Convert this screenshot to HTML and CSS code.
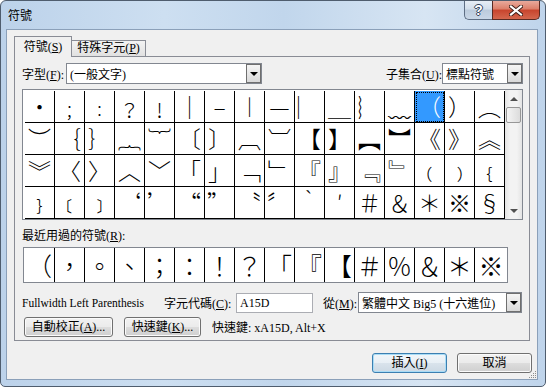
FILE: index.html
```html
<!DOCTYPE html>
<html lang="zh-Hant-TW">
<head>
    <meta charset="UTF-8">
    <title>符號</title>
    <link rel="stylesheet" href="styles.css">
</head>
<body>
<div class="window">
    <div class="titlebar">
        <span class="title">符號</span>
        <div class="caption">
            <span class="cap help">?</span>
            <span class="cap close">
                <svg width="14" height="11" viewBox="0 0 14 11">
                    <path d="M2 1.5 L12 9.5 M12 1.5 L2 9.5" stroke="#3a1c16" stroke-width="4" stroke-linecap="square" fill="none"/>
                    <path d="M2 1.5 L12 9.5 M12 1.5 L2 9.5" stroke="#fff" stroke-width="2.2" stroke-linecap="square" fill="none"/>
                </svg>
            </span>
        </div>
    </div>

    <div class="client">
        <div class="tabs">
            <div class="tab active">符號(<u>S</u>)</div>
            <div class="tab">特殊字元(<u>P</u>)</div>
        </div>

        <div class="page">
            <div class="font-row">
                <span class="font-label">字型(<u>F</u>):</span>
                <div class="combo font-combo"><span>(一般文字)</span><span class="drop"></span></div>
                <span class="subset-label">子集合(<u>U</u>):</span>
                <div class="combo subset-combo"><span>標點符號</span><span class="drop"></span></div>
            </div>

            <div class="symbols">
                <div class="sym-cells">
                    <span class="sym">·</span><span class="sym">﹔</span><span class="sym">﹕</span><span class="sym">﹖</span>
                    <span class="sym">﹗</span><span class="sym">｜</span><span class="sym">–</span><span class="sym">︱</span>
                    <span class="sym">—</span><span class="sym">︳</span><span class="sym">＿</span><span class="sym">︴</span>
                    <span class="sym">﹏</span><span class="sym sel">（</span><span class="sym">）</span><span class="sym">︵</span>

                    <span class="sym">︶</span><span class="sym">｛</span><span class="sym">｝</span><span class="sym">︷</span>
                    <span class="sym">︸</span><span class="sym">〔</span><span class="sym">〕</span><span class="sym">︹</span>
                    <span class="sym">︺</span><span class="sym">【</span><span class="sym">】</span><span class="sym">︻</span>
                    <span class="sym">︼</span><span class="sym">《</span><span class="sym">》</span><span class="sym">︽</span>

                    <span class="sym">︾</span><span class="sym">〈</span><span class="sym">〉</span><span class="sym">︿</span>
                    <span class="sym">﹀</span><span class="sym">「</span><span class="sym">」</span><span class="sym">﹁</span>
                    <span class="sym">﹂</span><span class="sym">『</span><span class="sym">』</span><span class="sym">﹃</span>
                    <span class="sym">﹄</span><span class="sym">﹙</span><span class="sym">﹚</span><span class="sym">﹛</span>

                    <span class="sym">﹜</span><span class="sym">﹝</span><span class="sym">﹞</span><span class="sym qr">‘</span>
                    <span class="sym ql">’</span><span class="sym qr">“</span><span class="sym ql">”</span><span class="sym qr">〝</span>
                    <span class="sym ql">〞</span><span class="sym">‵</span><span class="sym">′</span><span class="sym">＃</span>
                    <span class="sym">＆</span><span class="sym">＊</span><span class="sym">※</span><span class="sym">§</span>
                </div>
                <div class="scroll">
                    <span class="arrow up"></span>
                    <span class="thumb"></span>
                    <span class="track"></span>
                    <span class="arrow down"></span>
                </div>
            </div>

            <div class="recent-label">最近用過的符號(<u>R</u>):</div>
            <div class="recent">
                <span class="rc">（</span><span class="rc">，</span><span class="rc">。</span><span class="rc">、</span>
                <span class="rc">；</span><span class="rc">：</span><span class="rc">！</span><span class="rc">？</span>
                <span class="rc">「</span><span class="rc">『</span><span class="rc">【</span><span class="rc">＃</span>
                <span class="rc">％</span><span class="rc">＆</span><span class="rc">＊</span><span class="rc">※</span>
            </div>

            <div class="info-row">
                <span class="char-name">Fullwidth Left Parenthesis</span>
                <span class="code-label">字元代碼(<u>C</u>):</span>
                <span class="code-input">A15D</span>
                <span class="from-label">從(<u>M</u>):</span>
                <div class="combo from-combo"><span>繁體中文 Big5 (十六進位)</span><span class="drop"></span></div>
            </div>

            <div class="tool-row">
                <button class="btn autocorrect">自動校正(<u>A</u>)...</button>
                <button class="btn shortcut">快速鍵(<u>K</u>)...</button>
                <span class="shortcut-text">快速鍵: xA15D, Alt+X</span>
            </div>
        </div>

        <div class="dialog-buttons">
            <button class="btn default">插入(<u>I</u>)</button>
            <button class="btn">取消</button>
        </div>

        <svg class="grip" width="9" height="9" viewBox="0 0 9 9">
            <rect x="7" y="1" width="1" height="1" fill="#8c8c8c"/>
            <rect x="5" y="3" width="1" height="1" fill="#8c8c8c"/><rect x="7" y="3" width="1" height="1" fill="#8c8c8c"/>
            <rect x="3" y="5" width="1" height="1" fill="#8c8c8c"/><rect x="5" y="5" width="1" height="1" fill="#8c8c8c"/><rect x="7" y="5" width="1" height="1" fill="#8c8c8c"/>
            <rect x="1" y="7" width="1" height="1" fill="#8c8c8c"/><rect x="3" y="7" width="1" height="1" fill="#8c8c8c"/><rect x="5" y="7" width="1" height="1" fill="#8c8c8c"/><rect x="7" y="7" width="1" height="1" fill="#8c8c8c"/>
        </svg>
    </div>
</div>
</body>
</html>
```

FILE: styles.css
```css
* {
    margin: 0;
    padding: 0;
    box-sizing: border-box;
}

body {
    width: 546px;
    height: 387px;
    overflow: hidden;
    background: #fff;
    color: #000;
    font-family: "Liberation Serif", "Noto Sans CJK TC", serif;
    font-size: 12px;
}

/* Window frame */
.window {
    width: 546px;
    height: 387px;
    display: flex;
    flex-direction: column;
    border: 1px solid #4f5d6e;
    border-radius: 6px 6px 5px 5px;
    background: linear-gradient(to right, #bcd2ea 0%, #cddff1 30%, #c1d6ec 52%, #d7e5f3 78%, #bfd4eb 100%);
}

.titlebar {
    height: 28px;
    flex: none;
    display: flex;
    justify-content: space-between;
    align-items: flex-start;
    padding: 0 5px 0 7px;
}

.title {
    font-family: "Noto Sans CJK TC", sans-serif;
    line-height: 27px;
}

.caption {
    display: flex;
}

.cap {
    height: 19px;
    display: flex;
    align-items: center;
    justify-content: center;
    border: 1px solid #5e6e84;
    border-top: none;
}

.help {
    width: 28px;
    border-right: none;
    border-radius: 0 0 0 5px;
    background: linear-gradient(#e6edf5 0%, #d2deeb 45%, #bccbdc 50%, #c9d7e7 100%);
    color: #fff;
    font: bold 14px "Liberation Sans", sans-serif;
    text-shadow: 1px 0 0 #33435a, -1px 0 0 #33435a, 0 1px 0 #33435a, 0 -1px 0 #33435a;
}

.close {
    width: 48px;
    border-color: #5a2a22;
    border-radius: 0 0 5px 0;
    background: linear-gradient(#e9aa9c 0%, #dc7e69 45%, #c8442d 50%, #d4674e 100%);
}

/* Client area */
.client {
    flex: 1;
    position: relative;
    margin: 0 7px 6px 5px;
    padding: 6px 7px 0 7px;
    border: 1px solid #8ba0b9;
    background: #f0f0f0;
}

.tabs {
    display: flex;
    align-items: flex-end;
    height: 20px;
}

.tab {
    width: 75px;
    height: 16px;
    margin-left: -1px;
    border: 1px solid #898c95;
    border-bottom: none;
    background: linear-gradient(#f3f3f3, #e1e1e1);
    line-height: 15px;
    text-align: center;
}

.tab.active {
    position: relative;
    z-index: 1;
    width: 58px;
    height: 21px;
    margin-left: 0;
    margin-bottom: -1px;
    background: #f0f0f0;
    line-height: 20px;
}

.page {
    height: 285px;
    border: 1px solid #898c95;
    padding: 6px 6px 0 7px;
}

/* Font row */
.font-row {
    display: flex;
    align-items: center;
    height: 21px;
}

.font-label {
    width: 44px;
}

.combo {
    height: 21px;
    display: flex;
    align-items: center;
    justify-content: space-between;
    padding-left: 3px;
    border: 1px solid #828790;
    background: #fff;
}

.combo .drop {
    width: 15px;
    height: 19px;
    display: flex;
    align-items: center;
    justify-content: center;
    border: 1px solid #6f6f6f;
    background: linear-gradient(#f5f5f5, #d9d9d9);
}

.combo .drop::after {
    content: "";
    border-left: 4px solid transparent;
    border-right: 4px solid transparent;
    border-top: 4px solid #000;
}

.font-combo {
    width: 196px;
}

.subset-label {
    margin-left: auto;
    width: 56px;
}

.subset-combo {
    width: 81px;
}

/* Symbol grid */
.symbols {
    display: flex;
    height: 131px;
    margin-top: 5px;
    border: 1px solid #828790;
    background: #fff;
}

.sym-cells {
    display: grid;
    grid-template-columns: repeat(16, 30px);
    grid-auto-rows: 32px;
    padding: 1px 0 0 2px;
}

.sym {
    display: flex;
    align-items: center;
    justify-content: center;
    border-right: 1px solid #000;
    border-bottom: 1px solid #000;
    font-family: "Noto Sans CJK TC", sans-serif;
    font-size: 23px;
    font-weight: 300;
    line-height: 1;
}

.sym.ql {
    justify-content: flex-start;
    padding-left: 2px;
}

.sym.qr {
    justify-content: flex-end;
    padding-right: 3px;
}

.sym.sel {
    background: #3399ff;
    color: #fff;
    outline: 1px dotted #000;
    outline-offset: -2px;
}

.scroll {
    width: 17px;
    display: flex;
    flex-direction: column;
    background: linear-gradient(to right, #e4e4e4, #f3f3f3 30%, #f3f3f3 70%, #e4e4e4);
}

.arrow {
    height: 17px;
    display: flex;
    align-items: center;
    justify-content: center;
}

.arrow.up::after {
    content: "";
    border-left: 4px solid transparent;
    border-right: 4px solid transparent;
    border-bottom: 4px solid #505050;
}

.arrow.down::after {
    content: "";
    border-left: 4px solid transparent;
    border-right: 4px solid transparent;
    border-top: 4px solid #505050;
}

.thumb {
    height: 16px;
    margin: 0 1px;
    border: 1px solid #979797;
    border-radius: 2px;
    background: linear-gradient(to right, #f4f4f4, #dcdcdc);
}

.track {
    flex: 1;
}

/* Recently used */
.recent-label {
    height: 16px;
    margin-top: 8px;
    line-height: 16px;
}

.recent {
    display: flex;
    width: 485px;
    height: 36px;
    margin: 3px 0 0 1px;
    padding-left: 1px;
    border: 1px solid #828790;
    background: #fff;
}

.rc {
    width: 30px;
    display: flex;
    align-items: center;
    justify-content: center;
    border-right: 1px solid #000;
    font-family: "Noto Sans CJK TC", sans-serif;
    font-size: 25px;
    font-weight: 300;
    line-height: 1;
}

.rc:last-child {
    flex: 1;
    border-right: none;
}

/* Character info */
.info-row {
    display: flex;
    align-items: center;
    height: 21px;
    margin-top: 9px;
}

.char-name {
    width: 142px;
    font-size: 11.5px;
}

.code-label {
    width: 72px;
}

.code-input {
    width: 77px;
    height: 20px;
    padding-left: 3px;
    border: 1px solid #abadb3;
    background: #fff;
    line-height: 18px;
}

.from-label {
    width: 35px;
    margin-left: 10px;
}

.from-combo {
    width: 164px;
}

.tool-row {
    display: flex;
    align-items: center;
    height: 20px;
    margin-top: 4px;
}

/* Buttons */
.btn {
    height: 20px;
    border: 1px solid #707070;
    border-radius: 3px;
    background: linear-gradient(#f2f2f2 0%, #ebebeb 50%, #dddddd 51%, #cfcfcf 100%);
    box-shadow: inset 0 0 0 1px #fbfbfb;
    color: #000;
    font-family: "Liberation Serif", "Noto Sans CJK TC", serif;
    font-size: 12px;
    line-height: 18px;
}

.btn.autocorrect {
    width: 89px;
    margin-left: 2px;
}

.btn.shortcut {
    width: 77px;
    margin-left: 11px;
}

.shortcut-text {
    margin-left: 11px;
}

.dialog-buttons {
    display: flex;
    justify-content: flex-end;
    gap: 10px;
    margin: 12px -2px 0 0;
}

.dialog-buttons .btn {
    width: 75px;
}

.btn.default {
    border-color: #3c7fb1;
    box-shadow: inset 0 0 0 1px #a9dcf6;
    background: linear-gradient(#f1f6fa 0%, #e8eff5 50%, #d9e3ec 51%, #cdd9e4 100%);
}

.grip {
    position: absolute;
    right: 0;
    bottom: 0;
}
```
